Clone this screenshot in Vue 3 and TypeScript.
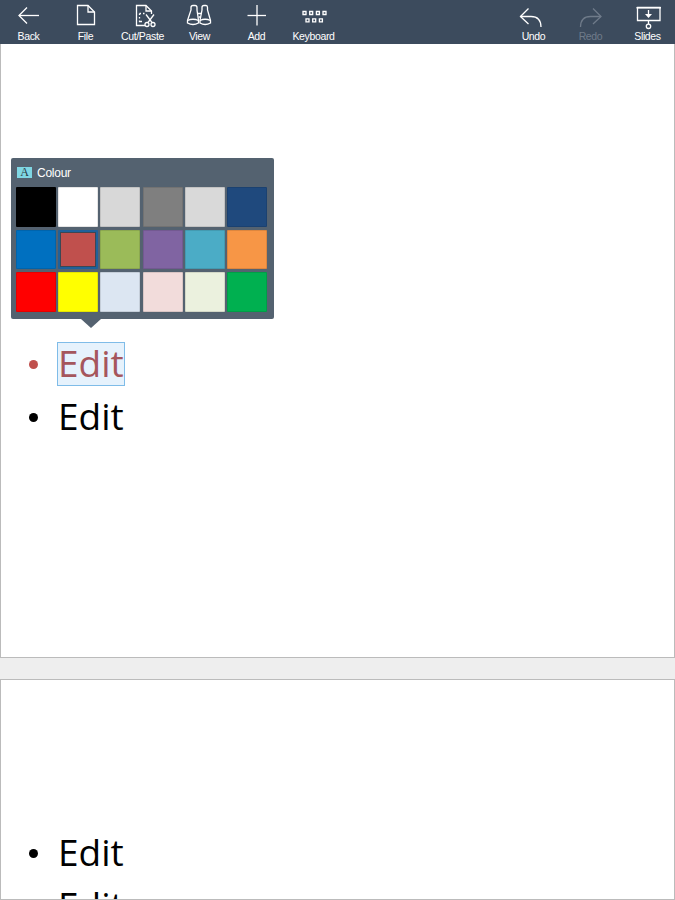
<script setup lang="ts">
interface ToolItem {
  label: string
  strokes: string[]
  fills?: string[]
  dim?: boolean
}

const leftTools: ToolItem[] = [
  { label: 'Back', strokes: ['M8 15.5H28', 'M16 7.5L8 15.5L16 23.5'] },
  { label: 'File', strokes: ['M9.5 5.5H20L26.5 12V24.5H9.5Z', 'M20 5.5V12H26.5'] },
  {
    label: 'Cut/Paste',
    strokes: [
      'M20 25.5H11.5V5.5H21L26.5 11V14',
      'M21 5.5V11H26.5',
      'M14.5 13.5H16M18 13.5H19.5M14.5 13.5V15M14.5 17V18.5M14.5 20.5V21.5H17',
      'M23 22.5L29 14.5',
      'M27 22.5L21 14.5',
      'M24 24.5A2 2 0 1 1 20 24.5A2 2 0 1 1 24 24.5Z',
      'M30 24.5A2 2 0 1 1 26 24.5A2 2 0 1 1 30 24.5Z',
    ],
  },
  {
    label: 'View',
    strokes: [
      'M5.5 20.5L9 10V7.5Q9 5.5 11 5.5H13Q15 5.5 15 7.5V10L16.5 20.5V23Q11 26 5.5 23Z',
      'M28.5 20.5L25.5 10V7.5Q25.5 5.5 24 5.5H22Q20 5.5 20 7.5V10L18 20.5V23Q23 26 28.5 23Z',
      'M15.5 13.5H19.5M16.5 17H18.5',
      'M5.5 20.5Q11 18 16.5 20.5M18 20.5Q23 18 28.5 20.5',
    ],
  },
  { label: 'Add', strokes: ['M18 5V25.5', 'M8.5 15.5H27'] },
  {
    label: 'Keyboard',
    strokes: [
      'M7 11.5h3v3h-3z',
      'M13.7 11.5h3v3h-3z',
      'M20.4 11.5h3v3h-3z',
      'M27 11.5h3v3h-3z',
      'M10 18.8h3v3h-3z',
      'M16.7 18.8h3v3h-3z',
      'M23.4 18.8h3v3h-3z',
    ],
  },
]

const rightTools: ToolItem[] = [
  { label: 'Undo', strokes: ['M12.5 8.5L4.5 16.5L12.5 24', 'M4.5 16.5H15Q25 16.5 25 27'] },
  { label: 'Redo', dim: true, strokes: ['M20 8.5L28 16.5L20 24', 'M28 16.5H17.5Q7.5 16.5 7.5 27'] },
  {
    label: 'Slides',
    strokes: ['M7.5 7.5H30V20.5H7.5Z', 'M18.5 10V15', 'M18.5 20.5V24', 'M20.7 26.3A2.2 2.2 0 1 1 16.3 26.3A2.2 2.2 0 1 1 20.7 26.3Z'],
    fills: ['M15 14H22L18.5 18Z', 'M6.5 7H31V8.5H6.5Z'],
  },
]

const colours = [
  '#000000', '#ffffff', '#d8d8d8', '#7f7f7f', '#d9d9d9', '#1f497d',
  '#0070c0', '#c0504d', '#9bbb59', '#8064a2', '#4bacc6', '#f79646',
  '#ff0000', '#ffff00', '#dce6f2', '#f2dcdb', '#ebf1de', '#00b050',
]
const selectedColour = '#c0504d'
</script>

<template>
  <div class="page">
    <header class="toolbar">
      <div v-for="(group, g) in [leftTools, rightTools]" :key="g" class="tool-group">
        <div v-for="tool in group" :key="tool.label" class="tool" :class="{ dim: tool.dim }">
          <svg class="tool-icon" width="36" height="30" viewBox="0 0 36 30">
            <path v-for="d in tool.strokes" :key="d" :d="d" class="stroke" />
            <path v-for="d in tool.fills" :key="d" :d="d" class="fill" />
          </svg>
          <span class="tool-label">{{ tool.label }}</span>
        </div>
      </div>
    </header>

    <section class="slide first">
      <div class="popover">
        <div class="popover-head">
          <span class="font-badge">A</span>
          <span class="popover-title">Colour</span>
        </div>
        <div class="swatches">
          <div
            v-for="c in colours"
            :key="c"
            class="swatch"
            :class="{ selected: c === selectedColour }"
            :style="{ backgroundColor: c }"
          ></div>
        </div>
      </div>

      <div class="row red">
        <span class="bullet"></span>
        <span class="text selected-text">Edit</span>
      </div>
      <div class="row">
        <span class="bullet"></span>
        <span class="text">Edit</span>
      </div>
    </section>

    <section class="slide second">
      <div class="row">
        <span class="bullet"></span>
        <span class="text">Edit</span>
      </div>
      <div class="row">
        <span class="bullet"></span>
        <span class="text">Edit</span>
      </div>
    </section>
  </div>
</template>

<style>
html,
body {
  overflow: hidden;
}
</style>

<style scoped>
.page {
  width: 675px;
  height: 900px;
  overflow: hidden;
  background: #eeeeee;
  font-family: 'Liberation Sans', Arial, sans-serif;
}
.toolbar {
  display: flex;
  justify-content: space-between;
  height: 44px;
  background: #3c4b5d;
}
.tool-group {
  display: flex;
}
.tool-group:last-child {
  margin-right: -1px;
}
.tool {
  display: flex;
  flex-direction: column;
  align-items: center;
  width: 57px;
  color: #ffffff;
}
.tool.dim {
  color: #6f7b8a;
}
.tool-icon {
  display: block;
}
.stroke {
  fill: none;
  stroke: currentColor;
  stroke-width: 1.3;
}
.fill {
  fill: currentColor;
}
.tool-label {
  font-size: 10.5px;
  line-height: 12px;
  letter-spacing: -0.35px;
}
.slide {
  position: relative;
  box-sizing: border-box;
  overflow: hidden;
  background: #ffffff;
  border: 1px solid #bbbbbb;
  padding-left: 28px;
}
.slide.first {
  height: 614px;
  border-top: none;
  padding-top: 294px;
}
.slide.second {
  height: 221px;
  margin-top: 21px;
  padding-top: 147px;
}
.popover {
  position: absolute;
  top: 114px;
  left: 10px;
  width: 263px;
  height: 161px;
  box-sizing: border-box;
  padding: 0 7px 8px 5px;
  background: #546270;
  border-radius: 2px;
}
.popover::after {
  content: '';
  position: absolute;
  top: 100%;
  left: 70px;
  border-style: solid;
  border-width: 9px 10px 0;
  border-color: #546270 transparent transparent;
}
.popover-head {
  display: flex;
  align-items: center;
  gap: 5px;
  height: 29px;
  padding-left: 1px;
}
.font-badge {
  width: 15px;
  height: 11px;
  background: #7fd6e3;
  color: #2a3a44;
  font-family: 'Liberation Serif', serif;
  font-size: 12px;
  line-height: 11px;
  text-align: center;
}
.popover-title {
  color: #ffffff;
  font-size: 12px;
  letter-spacing: -0.25px;
}
.swatches {
  display: grid;
  grid-template-columns: repeat(6, 40px);
  grid-auto-rows: 39.5px;
  gap: 3px 2.2px;
}
.swatch {
  box-sizing: border-box;
  border: 1px solid rgba(0, 0, 0, 0.1);
  border-radius: 1px;
}
.swatch.selected {
  border: 2px solid #20619a;
  box-shadow: inset 0 0 0 1px #3c4754;
}
.row {
  display: flex;
  align-items: center;
  height: 53px;
  color: #000000;
}
.row.red {
  color: #a5565c;
}
.row.red .bullet {
  background: #c0504d;
}
.bullet {
  flex: none;
  width: 9px;
  height: 9px;
  margin-right: 19px;
  border-radius: 50%;
  background: #000000;
}
.text {
  box-sizing: border-box;
  width: 68px;
  height: 44px;
  margin-bottom: 2px;
  border: 1px solid transparent;
  font-family: 'Open Sans', 'Noto Sans', sans-serif;
  font-size: 37px;
  font-weight: 500;
  line-height: 39px;
}
.selected-text {
  background: #e6f2fc;
  border-color: #7fbce8;
}
</style>
